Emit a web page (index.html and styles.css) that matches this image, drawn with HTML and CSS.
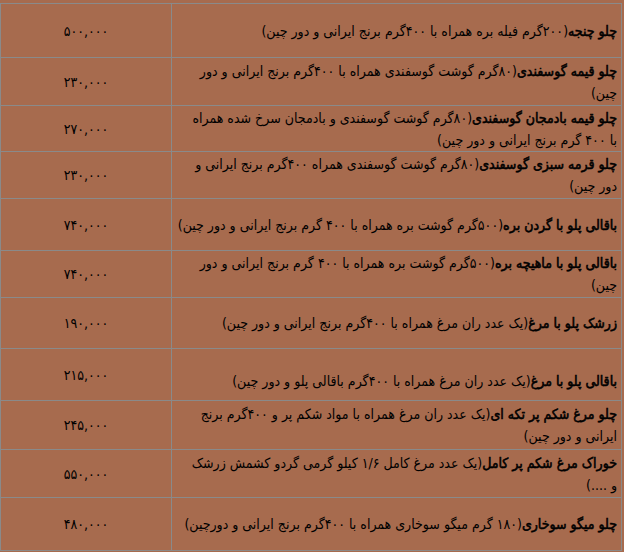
FILE: index.html
```html
<!DOCTYPE html>
<html lang="fa" dir="rtl">
<head>
<meta charset="utf-8">
<title>منو</title>
<link rel="stylesheet" href="styles.css">
</head>
<body>
<table class="menu">
  <tbody>
    <tr class="r54"><td class="item"><b>چلو چنجه</b>(۲۰۰گرم فیله بره همراه با ۴۰۰گرم برنج ایرانی و دور چین)</td><td class="price">۵۰۰,۰۰۰</td></tr>
    <tr class="r48"><td class="item"><b>چلو قیمه گوسفندی</b>(۸۰گرم گوشت گوسفندی همراه با ۴۰۰گرم برنج ایرانی و دور چین)</td><td class="price">۲۳۰,۰۰۰</td></tr>
    <tr class="r46"><td class="item"><b>چلو قیمه بادمجان گوسفندی</b>(۸۰گرم گوشت گوسفندی و بادمجان سرخ شده همراه با ۴۰۰ گرم برنج ایرانی و دور چین)</td><td class="price">۲۷۰,۰۰۰</td></tr>
    <tr class="r47"><td class="item"><b>چلو قرمه سبزی گوسفندی</b>(۸۰گرم گوشت گوسفندی همراه ۴۰۰گرم برنج ایرانی و دور چین)</td><td class="price">۲۳۰,۰۰۰</td></tr>
    <tr class="r52"><td class="item fit"><b>باقالی پلو با گردن بره</b>(۵۰۰گرم گوشت بره همراه با ۴۰۰ گرم برنج ایرانی و دور چین)</td><td class="price">۷۴۰,۰۰۰</td></tr>
    <tr class="r47"><td class="item"><b>باقالی پلو با ماهیچه بره</b>(۵۰۰گرم گوشت بره همراه با ۴۰۰ گرم برنج ایرانی و دور چین)</td><td class="price">۷۴۰,۰۰۰</td></tr>
    <tr class="r51"><td class="item"><b>زرشک پلو با مرغ</b>(یک عدد ران مرغ همراه با ۴۰۰گرم برنج ایرانی و دور چین)</td><td class="price">۱۹۰,۰۰۰</td></tr>
    <tr class="r52"><td class="item low"><b>باقالی پلو با مرغ</b>(یک عدد ران مرغ همراه با ۴۰۰گرم باقالی پلو و دور چین)</td><td class="price">۲۱۵,۰۰۰</td></tr>
    <tr class="r49"><td class="item"><b>چلو مرغ شکم پر تکه ای</b>(یک عدد ران مرغ همراه با مواد شکم پر و ۴۰۰گرم برنج ایرانی و دور چین)</td><td class="price">۲۴۵,۰۰۰</td></tr>
    <tr class="r48"><td class="item"><b>خوراک مرغ شکم پر کامل</b>(یک عدد مرغ کامل ۱/۶ کیلو گرمی گردو کشمش زرشک و ....)</td><td class="price">۵۵۰,۰۰۰</td></tr>
    <tr class="r53"><td class="item"><b>چلو میگو سوخاری</b>(۱۸۰ گرم میگو سوخاری همراه با ۴۰۰گرم برنج ایرانی و دورچین)</td><td class="price">۴۸۰,۰۰۰</td></tr>
  </tbody>
</table>
</body>
</html>
```

FILE: styles.css
```css
html, body {
  margin: 0;
  padding: 0;
  background: #a76b4e;
}
body {
  padding-top: 3px;
  font-family: "DejaVu Sans Condensed", "DejaVu Sans", sans-serif;
  font-stretch: condensed;
  font-size: 14px;
  color: #000;
}
.menu {
  width: 622px;
  margin-right: 2px;
  border-collapse: collapse;
  table-layout: fixed;
}
.menu td {
  border: 1px solid #8a8a8a;
  vertical-align: middle;
  line-height: 22px;
}
.item {
  width: 434px;
  padding: 0 4px 0 11px;
  text-align: right;
}
.item.fit {
  padding-left: 0;
}
.item b {
  font-weight: normal;
  -webkit-text-stroke: 0.55px #000;
}
.low {
  padding-top: 12px;
}
.price {
  text-align: center;
  direction: ltr;
  padding: 0;
}
.r46 td { height: 45px; }
.r47 td { height: 46px; }
.r48 td { height: 47px; }
.r49 td { height: 48px; }
.r51 td { height: 50px; }
.r52 td { height: 51px; }
.r53 td { height: 52px; }
.r54 td { height: 53px; }
.r52 .low { height: 39px; }
```
